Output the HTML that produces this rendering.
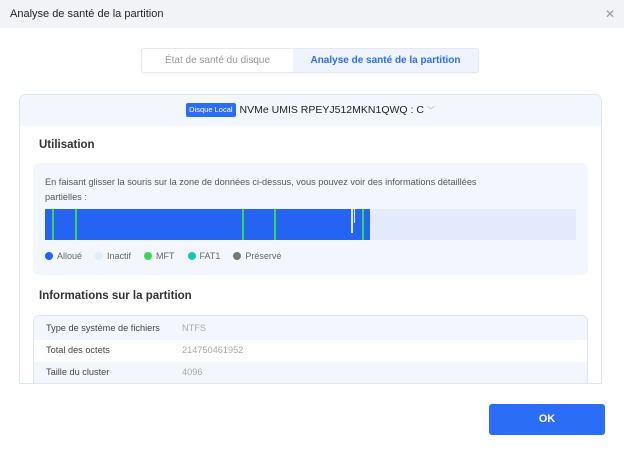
<!DOCTYPE html>
<html><head><meta charset="utf-8"><style>
*{box-sizing:border-box;margin:0;padding:0}
body{width:624px;height:450px;background:#fff;font-family:"Liberation Sans",sans-serif;position:relative;overflow:hidden;color:#222}
.hdr{position:absolute;left:0;top:0;width:624px;height:28px;background:#f1f3f7;font-size:11px;line-height:28px;padding-left:10px;color:#222}
.x{position:absolute;right:9px;top:0;font-size:12px;color:#999;line-height:28px}
.tabs{position:absolute;left:141px;top:48px;width:338px;height:25px;border:1px solid #e3e8f2;border-radius:3px;display:flex;font-size:10px;box-shadow:0 1px 2px rgba(0,0,0,.04)}
.tabs div{line-height:23px;text-align:center}
.t1{width:151px;color:#999}
.t2{flex:1;background:#eef3fd;color:#2b6ef5;font-weight:bold}
.card{position:absolute;left:19px;top:94px;width:583px;height:300px;border:1px solid #dde5f3;border-radius:7px;overflow:hidden}
.ch{height:31px;background:#f3f6fc;text-align:center;font-size:10.5px;line-height:31px;color:#222}
.badge{display:inline-block;background:#2b6ef5;color:#fff;font-size:7.5px;line-height:14px;padding:0 3px;border-radius:2px;vertical-align:1px;margin-right:4px}
.h{position:absolute;left:19px;font-size:11.5px;font-weight:bold;color:#333}
.box{position:absolute;left:13px;top:68px;width:555px;height:112px;background:#f3f7fd;border-radius:6px}
.desc{position:absolute;left:12px;top:12px;width:530px;font-size:9.2px;line-height:15px;color:#555}
.bar{position:absolute;left:12px;top:46px;width:531px;height:31px;background:#e2eafb}
.leg{position:absolute;left:12px;top:88px;font-size:9px;color:#666;display:flex;gap:13px}
.leg span{display:flex;align-items:center}
.leg i{display:inline-block;width:8px;height:8px;border-radius:50%;margin-right:4px}
.tbl{position:absolute;left:13px;top:220px;width:555px;border:1px solid #dde5f3;border-radius:6px;overflow:hidden}
.r{height:21.5px;font-size:9.2px;line-height:21.5px;display:flex;color:#444}
.r b{font-weight:normal;width:148px;padding-left:12px}
.r em{font-style:normal;color:#aaa}
.ok{position:absolute;left:489px;top:404px;width:116px;height:31px;background:#2b6ef5;border-radius:3px;color:#fff;font-weight:bold;font-size:11px;text-align:center;line-height:31px}
</style></head><body>
<div class="hdr">Analyse de santé de la partition<span class="x">✕</span></div>
<div class="tabs"><div class="t1">État de santé du disque</div><div class="t2">Analyse de santé de la partition</div></div>
<div class="card">
<div class="ch"><span class="badge">Disque Local</span>NVMe UMIS RPEYJ512MKN1QWQ : C <span style="color:#aaa;font-size:8px">﹀</span></div>
<div class="h" style="top:44px">Utilisation</div>
<div class="box">
<div class="desc">En faisant glisser la souris sur la zone de données ci-dessus, vous pouvez voir des informations détaillées<br>partielles :</div>
<div class="bar"><svg width="531" height="31" style="display:block">
<rect x="0" y="0" width="325" height="31" fill="#2563f2"/>
<rect x="7" y="0" width="2" height="31" fill="#3ad65a"/>
<rect x="30" y="0" width="2" height="31" fill="#3ad65a"/>
<rect x="197" y="0" width="2" height="31" fill="#3ad65a"/>
<rect x="229" y="0" width="2" height="31" fill="#3ad65a"/>
<rect x="317" y="0" width="2" height="31" fill="#3ad65a"/>
<rect x="306" y="0" width="2" height="24" fill="#e2eafb"/>
<rect x="309" y="0" width="1" height="14" fill="#e2eafb"/>
</svg></div>
<div class="leg"><span><i style="background:#2563f2"></i>Alloué</span><span><i style="background:#e2eafb"></i>Inactif</span><span><i style="background:#3ad65a"></i>MFT</span><span><i style="background:#1ec3b3"></i>FAT1</span><span><i style="background:#777"></i>Préservé</span></div>
</div>
<div class="h" style="top:195px">Informations sur la partition</div>
<div class="tbl">
<div class="r" style="background:#f3f6fc;height:24px;line-height:24px"><b>Type de système de fichiers</b><em>NTFS</em></div>
<div class="r"><b>Total des octets</b><em>214750461952</em></div>
<div class="r" style="background:#f3f6fc"><b>Taille du cluster</b><em>4096</em></div>
<div class="r"><b></b></div>
</div>
</div>
<div style="position:absolute;left:19px;top:383px;width:583px;height:12px;background:#fff"></div>
<div style="position:absolute;left:19px;top:383px;width:583px;height:1px;background:#dde5f3"></div>
<div class="ok">OK</div>
</body></html>
